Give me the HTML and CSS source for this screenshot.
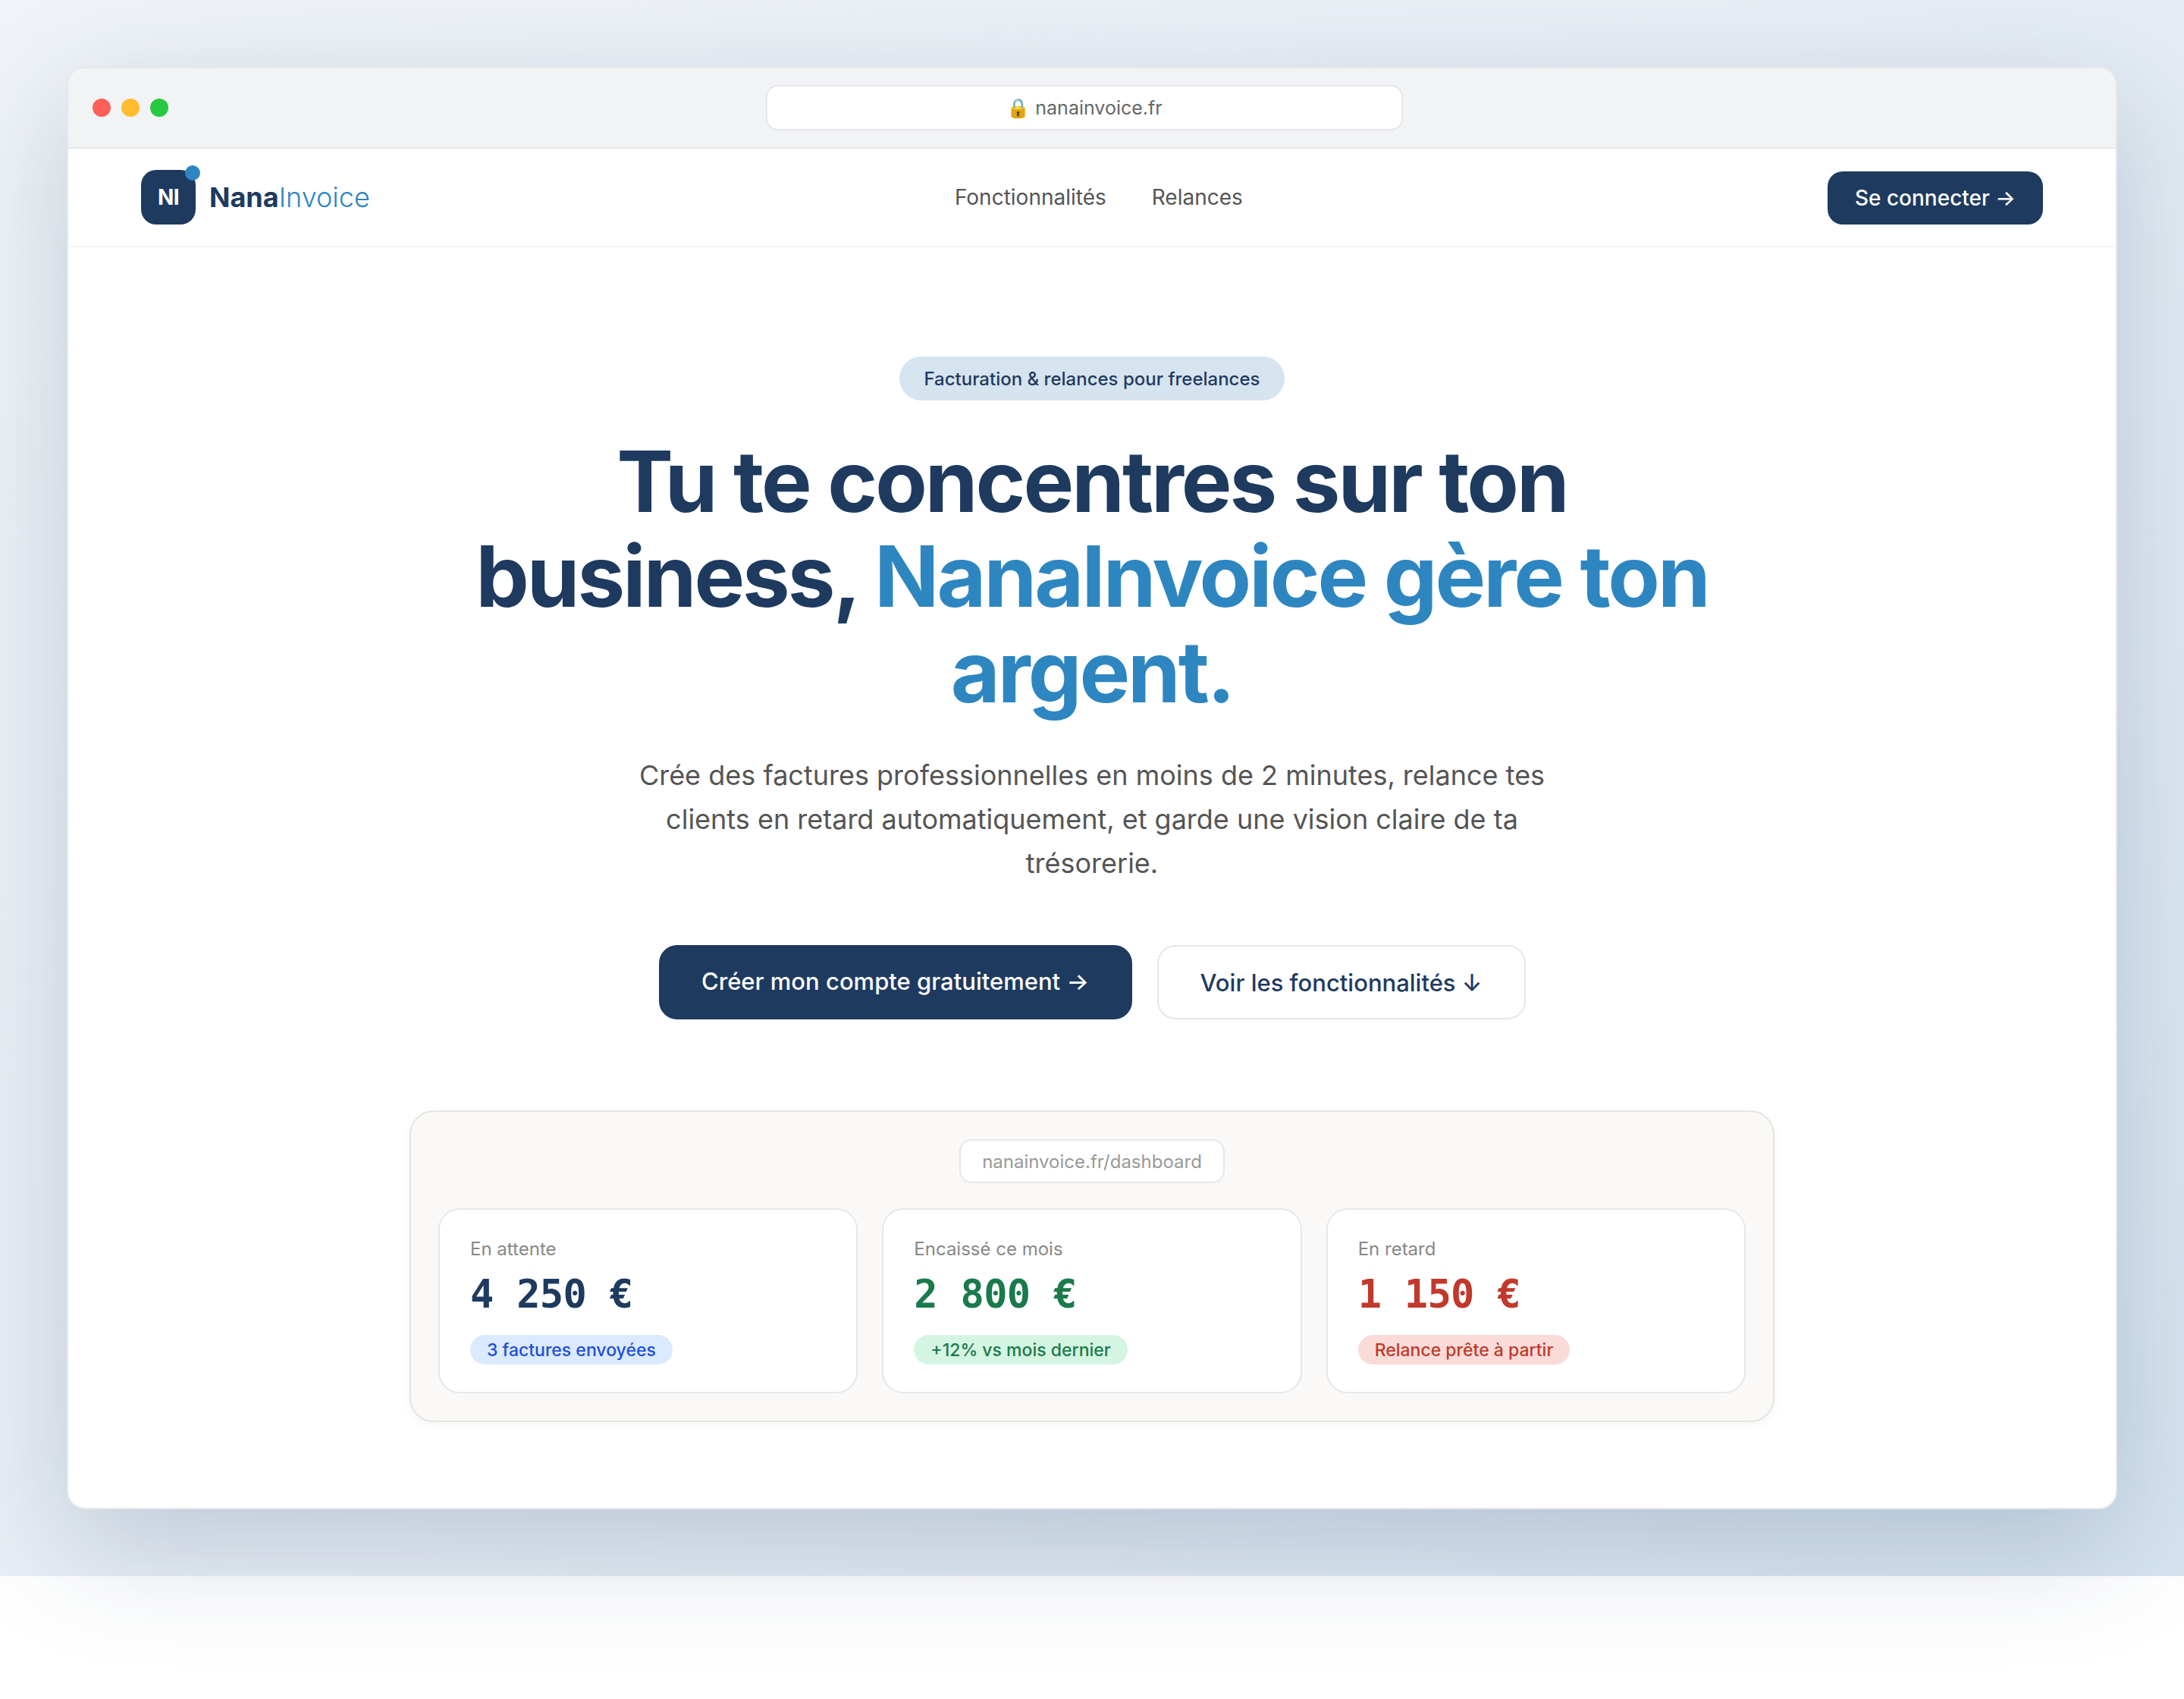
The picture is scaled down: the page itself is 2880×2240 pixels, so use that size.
FILE: index.html
```html
<!DOCTYPE html>
<html lang="fr">
<head>
<meta charset="utf-8">
<title>NanaInvoice</title>
<link rel="stylesheet" href="styles.css">
</head>
<body>
<div class="stage">
  <div class="window">
    <div class="chrome">
      <div class="dots"><span class="dot red"></span><span class="dot yellow"></span><span class="dot green"></span></div>
      <div class="address">🔒 nanainvoice.fr</div>
      <div class="chrome-spacer"></div>
    </div>
    <nav class="nav">
      <div class="logo">
        <div class="mark">NI<span class="mark-dot"></span></div>
        <div class="wordmark"><b>Nana</b><span>Invoice</span></div>
      </div>
      <div class="links"><a>Fonctionnalités</a><a>Relances</a></div>
      <a class="login">Se connecter →</a>
    </nav>
    <main class="hero">
      <div class="badge">Facturation &amp; relances pour freelances</div>
      <h1>Tu te concentres sur ton business, <em>NanaInvoice gère ton argent.</em></h1>
      <p class="lead">Crée des factures professionnelles en moins de 2 minutes, relance tes clients en retard automatiquement, et garde une vision claire de ta trésorerie.</p>
      <div class="cta">
        <a class="btn primary">Créer mon compte gratuitement →</a>
        <a class="btn secondary">Voir les fonctionnalités ↓</a>
      </div>
      <section class="panel">
        <div class="panel-url">nanainvoice.fr/dashboard</div>
        <div class="cards">
          <div class="card">
            <div class="label">En attente</div>
            <div class="value navy">4 250 €</div>
            <span class="pill blue">3 factures envoyées</span>
          </div>
          <div class="card">
            <div class="label">Encaissé ce mois</div>
            <div class="value emerald">2 800 €</div>
            <span class="pill mint">+12% vs mois dernier</span>
          </div>
          <div class="card">
            <div class="label">En retard</div>
            <div class="value crimson">1 150 €</div>
            <span class="pill rose">Relance prête à partir</span>
          </div>
        </div>
      </section>
    </main>
  </div>
</div>
</body>
</html>
```
FILE: styles.css
```css
* { box-sizing: border-box; }
html, body { margin: 0; padding: 0; }
body { min-height: 2240px; background: #fff; font-family: Inter, "Noto Sans", sans-serif; color: #1e3a5f; }
a { text-decoration: none; color: inherit; }

.stage { padding: 88px; background: linear-gradient(135deg, #f0f4f8 0%, #e8eef5 50%, #d6e4f0 100%); }
.window { background: #fff; border: 2px solid #e5e7eb; border-radius: 24px; box-shadow: 0 48px 160px rgba(30, 58, 95, .22); }

.chrome { display: flex; align-items: center; height: 106px; padding: 0 32px; background: #f1f3f5; border-bottom: 2px solid #e5e7eb; border-radius: 22px 22px 0 0; }
.dots { display: flex; gap: 14px; width: 100px; flex: none; }
.dot { width: 24px; height: 24px; border-radius: 50%; }
.red { background: #ff5f57; }
.yellow { background: #febc2e; }
.green { background: #28c840; }
.address { flex: none; width: 840px; height: 60px; margin: 0 auto; background: #fff; border: 2px solid #e5e7eb; border-radius: 16px; display: flex; align-items: center; justify-content: center; font-size: 25px; color: #666; }
.chrome-spacer { width: 120px; flex: none; }

.nav { display: flex; align-items: center; justify-content: space-between; height: 130px; padding: 0 96px; border-bottom: 2px solid #f3f4f6; }
.logo { display: flex; align-items: center; gap: 18px; }
.mark { position: relative; width: 72px; height: 72px; border-radius: 20px; background: #1e3a5f; color: #fff; font-size: 28px; font-weight: 700; display: flex; align-items: center; justify-content: center; letter-spacing: -.02em; }
.mark-dot { position: absolute; top: -6px; right: -6px; width: 20px; height: 20px; border-radius: 50%; background: #2e86c1; }
.wordmark { font-size: 36px; }
.wordmark b { font-weight: 700; color: #1e3a5f; }
.wordmark span { font-weight: 300; color: #2e86c1; }
.links { display: flex; gap: 60px; font-size: 28px; color: #555; }
.login { height: 70px; width: 284px; margin-top: 2px; display: flex; align-items: center; justify-content: center; background: #1e3a5f; color: #fff; border-radius: 20px; font-size: 28px; font-weight: 500; }

.hero { display: flex; flex-direction: column; align-items: center; padding: 144px 96px 113px; }
.badge { height: 58px; padding: 0 32px; display: flex; align-items: center; background: #d6e4f0; color: #1e3a5f; border-radius: 999px; font-size: 24px; font-weight: 500; }
h1 { margin: 44px 0 0; max-width: 1680px; text-align: center; font-size: 112px; line-height: 1.12; font-weight: 700; letter-spacing: -3px; color: #1e3a5f; }
h1 em { font-style: normal; color: #2e86c1; }
.lead { margin: 45px 0 0; max-width: 1240px; text-align: center; font-size: 36px; line-height: 58px; color: #555; }
.cta { display: flex; gap: 33px; margin-top: 79px; }
.btn { height: 98px; display: flex; align-items: center; justify-content: center; font-size: 31px; font-weight: 500; border-radius: 24px; }
.primary { width: 624px; padding-bottom: 4px; background: #1e3a5f; color: #fff; }
.secondary { width: 486px; background: #fff; color: #1e3a5f; border: 2px solid #e5e7eb; }

.panel { width: 1800px; margin-top: 120px; padding: 36px; background: #faf9f7; border: 2px solid #e7e5e0; border-radius: 32px; box-shadow: 0 4px 16px rgba(0, 0, 0, .04); display: flex; flex-direction: column; align-items: center; }
.panel-url { height: 58px; padding: 0 28px; display: flex; align-items: center; background: #fff; border: 2px solid #e5e7eb; border-radius: 16px; font-size: 24px; color: #999; }
.cards { align-self: stretch; display: grid; grid-template-columns: repeat(3, 1fr); gap: 32px; margin-top: 33px; }
.card { background: #fff; border: 2px solid #e5e7eb; border-radius: 28px; padding: 39px 40px 36px; display: flex; flex-direction: column; align-items: flex-start; height: 244px; }
.label { font-size: 24px; line-height: 26px; color: #888; }
.value { margin-top: 14px; font-family: "DejaVu Sans Mono", monospace; font-size: 52px; font-weight: 700; line-height: 64px; letter-spacing: -.7px; }
.navy { color: #1e3a5f; }
.emerald { color: #1a7a4a; }
.crimson { color: #c0392b; }
.pill { margin-top: 22px; height: 40px; padding: 0 22px; display: flex; align-items: center; border-radius: 999px; font-size: 23px; font-weight: 500; }
.blue { background: #dbeafe; color: #1d4ed8; }
.mint { background: #d4f5e2; color: #1a7a4a; }
.rose { background: #fadbd8; color: #c0392b; }
```
